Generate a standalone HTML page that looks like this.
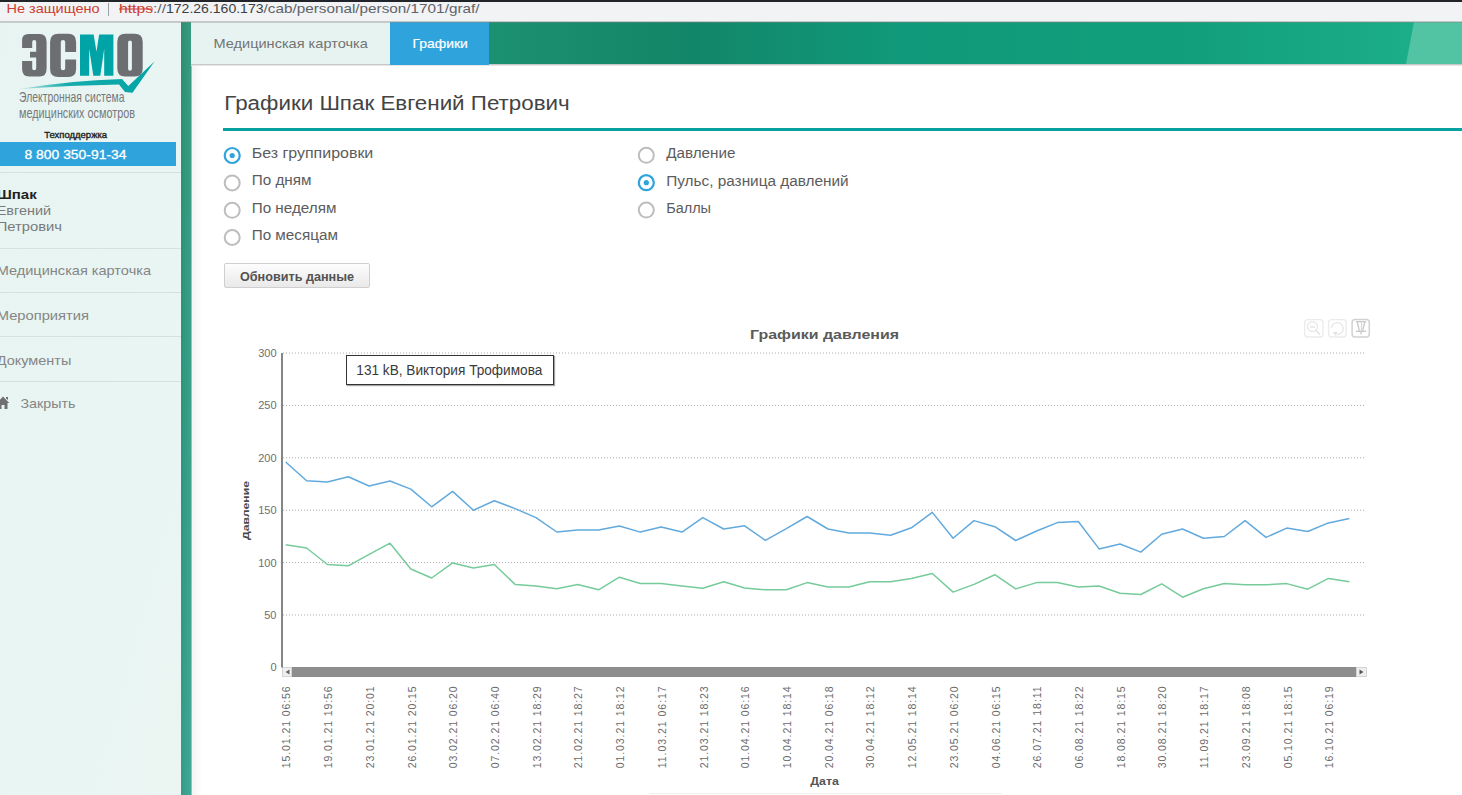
<!DOCTYPE html>
<html><head><meta charset="utf-8">
<style>
html,body{margin:0;padding:0;}
body{width:1462px;height:795px;overflow:hidden;position:relative;background:#fff;font-family:"Liberation Sans",sans-serif;}
.abs{position:absolute;}
svg{position:absolute;left:0;top:0;}
</style></head><body>
<!-- browser top -->
<div class="abs" style="left:0;top:0;width:1462px;height:2px;background:#212428"></div>
<div class="abs" style="left:0;top:2px;width:1462px;height:19px;background:#f1f3f4"></div>
<div class="abs" style="left:0;top:21px;width:1462px;height:1px;background:#c6c7c7"></div>
<!-- sidebar -->
<div class="abs" style="left:0;top:22px;width:181px;height:773px;background:linear-gradient(105deg,#e7f4f1 0%,#e8f5f2 50%,#ebf6f3 100%)"></div>
<div class="abs" style="left:181px;top:22px;width:10px;height:773px;background:linear-gradient(90deg,rgba(0,40,20,0.07),rgba(255,255,255,0.05)),linear-gradient(180deg,#2e967a 0%,#319d84 50%,#37a491 100%)"></div>
<!-- tab bar -->
<div class="abs" style="left:191px;top:22px;width:1271px;height:42px;background:linear-gradient(90deg,#1c9171 23.4%,#138568 38.5%,#10997a 55.8%,#11a07b 79.4%,#1cae89 96%,#1db08a 100%)"></div>
<div class="abs" style="left:191px;top:22px;width:199px;height:42px;background:#e7f3f0"></div>
<div class="abs" style="left:390px;top:22px;width:99px;height:43px;background:#2fa4dc"></div>
<div class="abs" style="left:191px;top:64px;width:199px;height:1px;background:#c6c9c8"></div><div class="abs" style="left:489px;top:64px;width:973px;height:1px;background:#c6c9c8"></div><div class="abs" style="left:191px;top:65px;width:1271px;height:1px;background:#e6e6e6"></div>
<div class="abs" style="left:191px;top:66px;width:1px;height:729px;background:#b4b4b4"></div><div class="abs" style="left:192px;top:66px;width:10px;height:729px;background:linear-gradient(90deg,#f3f3f3,#ffffff)"></div>

<svg width="1462" height="795" viewBox="0 0 1462 795">
<polygon points="1414,22 1462,22 1462,64 1406,64" fill="#52c3a3"/><rect x="0" y="22" width="1462" height="1" fill="#888" fill-opacity="0.35"/>
<!-- address bar text -->
<g font-size="13">
<text x="6.5" y="13" fill="#cf3b30" textLength="93" lengthAdjust="spacingAndGlyphs">Не защищено</text>
<rect x="108" y="3" width="1" height="13" fill="#9aa0a6"/>
<text x="119" y="13" fill="#cf3b30" textLength="34" lengthAdjust="spacingAndGlyphs">https</text>
<rect x="119" y="8.5" width="34" height="1" fill="#cf3b30"/>
<text x="153" y="13" fill="#5f6368" textLength="13" lengthAdjust="spacingAndGlyphs">://</text>
<text x="166" y="13" fill="#3c4043" textLength="97.5" lengthAdjust="spacingAndGlyphs">172.26.160.173</text>
<text x="263.5" y="13" fill="#5f6368" textLength="216" lengthAdjust="spacingAndGlyphs">/cab/personal/person/1701/graf/</text>
</g>

<!-- logo -->
<g fill="#6d6e71">
<path d="M22.1,40.5 Q22.1,34.1 28.5,34.1 H39.6 Q46.6,34.1 46.6,42 V68.5 Q46.6,76.5 39.6,76.5 H29.1 Q22.1,76.5 22.1,69 V61.1 H32.2 V68.3 Q32.2,70.3 34.2,70.3 Q36.2,70.3 36.2,68.3 V57.4 H30 V51.7 H36.2 V42 Q36.2,40 34.2,40 Q32.2,40 32.2,42 V47.9 H22.1 Z"/>
<path d="M50.1,42 Q50.1,33.8 58.5,33.8 H68.2 Q76.1,33.8 76.1,42 V52 H65.2 V42.1 Q65.2,40.1 63,40.1 Q60.8,40.1 60.8,42.1 V68.3 Q60.8,70.3 63,70.3 Q65.2,70.3 65.2,68.3 V59.6 H76.1 V68.9 Q76.1,76.9 68.2,76.9 H58.5 Q50.1,76.9 50.1,68.9 Z"/>
<path d="M125.3,33.7 H134.7 Q142.7,33.7 142.7,41.7 V68.5 Q142.7,76.5 134.7,76.5 H125.3 Q117.3,76.5 117.3,68.5 V41.7 Q117.3,33.7 125.3,33.7 Z M128.1,42.3 Q128.1,40.4 130,40.4 Q131.9,40.4 131.9,42.3 V68.8 Q131.9,70.7 130,70.7 Q128.1,70.7 128.1,68.8 Z" fill-rule="evenodd"/>
</g>
<path d="M80,34.6 L93.6,34.6 L96.5,51.7 L99.1,34.6 L113.4,34.6 L113.4,75.7 L104.2,75.7 L104.2,48.8 L100.3,75.7 L93.3,75.7 L89.2,48.8 L89.2,75.7 L80,75.7 Z" fill="#00a4a6"/>
<defs><linearGradient id="sw" x1="19" y1="0" x2="154" y2="0" gradientUnits="userSpaceOnUse"><stop offset="0" stop-color="#00a4a6" stop-opacity="0.15"/><stop offset="0.35" stop-color="#00a4a6" stop-opacity="0.9"/><stop offset="1" stop-color="#00a4a6"/></linearGradient></defs><path d="M19,89 Q70,80.5 122,79 L128.3,86 L154.5,61.5 L132.5,92.8 L125,92 L119,84.6 Q70,85.5 19,89 Z" fill="url(#sw)"/>
<g fill="#77787a" font-size="14.5">
<text x="19" y="102.4" textLength="105.5" lengthAdjust="spacingAndGlyphs">Электронная система</text>
<text x="19" y="118.1" textLength="116" lengthAdjust="spacingAndGlyphs">медицинских осмотров</text>
</g>
<text x="44.3" y="137.9" font-size="8.8" fill="#222" stroke="#222" stroke-width="0.35" textLength="62.8" lengthAdjust="spacingAndGlyphs">Техподдержка</text>
</svg>

<div class="abs" style="left:0;top:142px;width:176px;height:24px;background:#2ea3dc"></div>
<div class="abs" style="left:0;top:172px;width:181px;height:1px;background:#d6e0de"></div>
<div class="abs" style="left:0;top:248px;width:181px;height:1px;background:#d6e0de"></div>
<div class="abs" style="left:0;top:292px;width:181px;height:1px;background:#d6e0de"></div>
<div class="abs" style="left:0;top:336px;width:181px;height:1px;background:#d6e0de"></div>
<div class="abs" style="left:0;top:381px;width:181px;height:1px;background:#d6e0de"></div>
<!-- content -->
<div class="abs" style="left:223px;top:128px;width:1239px;height:3px;background:#06a1a1"></div>
<div class="abs" style="left:224px;top:263px;width:146px;height:25px;border:1px solid #cfcfcf;border-radius:2px;box-sizing:border-box;background:linear-gradient(#fdfdfd,#e9e9e9)"></div>
<!-- chart scrollbar -->
<div class="abs" style="left:282px;top:667px;width:1085px;height:10px;background:#8e8e8e"></div>
<div class="abs" style="left:282px;top:667px;width:10px;height:10px;background:#efefef;border:1px solid #d4d4d4;box-sizing:border-box"></div>
<div class="abs" style="left:1356px;top:667px;width:11px;height:10px;background:#efefef;border:1px solid #d4d4d4;box-sizing:border-box"></div>
<div class="abs" style="left:346px;top:355px;width:208px;height:30px;border:1px solid #333;box-sizing:border-box;background:#fff;box-shadow:1px 1px 1px rgba(0,0,0,.35)"></div>
<div class="abs" style="left:649px;top:793px;width:353px;height:1px;background:#efefef"></div>

<svg width="1462" height="795" viewBox="0 0 1462 795">
<!-- phone -->
<text x="24.5" y="158.8" font-size="13" fill="#fff" stroke="#fff" stroke-width="0.3" textLength="102" lengthAdjust="spacingAndGlyphs">8 800 350-91-34</text>
<!-- person -->
<text x="-3.3" y="199" font-size="13" font-weight="bold" fill="#222" textLength="40" lengthAdjust="spacingAndGlyphs">Шпак</text>
<g font-size="13" fill="#7a7a7a">
<text x="-3.3" y="215.1" textLength="54.3" lengthAdjust="spacingAndGlyphs">Евгений</text>
<text x="-3.3" y="231.2" textLength="65.3" lengthAdjust="spacingAndGlyphs">Петрович</text>
</g>
<g font-size="13" fill="#858585">
<text x="-3.3" y="275.4" textLength="154.3" lengthAdjust="spacingAndGlyphs">Медицинская карточка</text>
<text x="-3.3" y="320.2" textLength="92.3" lengthAdjust="spacingAndGlyphs">Мероприятия</text>
<text x="-3.3" y="364.7" textLength="74.6" lengthAdjust="spacingAndGlyphs">Документы</text>
<text x="20.4" y="408.3" textLength="55" lengthAdjust="spacingAndGlyphs">Закрыть</text>
</g>
<path d="M-3,403 L3,396.5 L9.3,403 L7.5,403 L7.5,409 L4.5,409 L4.5,405 L1.5,405 L1.5,409 L-1.5,409 L-1.5,403 Z M6,397 H8 V400 L6,398.5 Z" fill="#6f6f6f"/>
<!-- tabs text -->
<text x="213.5" y="48.3" font-size="13" fill="#737373" textLength="154.3" lengthAdjust="spacingAndGlyphs">Медицинская карточка</text>
<text x="412.6" y="48.3" font-size="13" fill="#fff" stroke="#fff" stroke-width="0.2" textLength="55.2" lengthAdjust="spacingAndGlyphs">Графики</text>
<!-- heading -->
<text x="224.3" y="110.3" font-size="19.6" fill="#444" textLength="345.4" lengthAdjust="spacingAndGlyphs">Графики Шпак Евгений Петрович</text>
<!-- radios -->
<g fill="none" stroke="#bdbdbd" stroke-width="2">
<circle cx="232.2" cy="182.9" r="7.5"/>
<circle cx="232.2" cy="210.3" r="7.5"/>
<circle cx="232.2" cy="237.5" r="7.5"/>
<circle cx="646.3" cy="155.3" r="7.5"/>
<circle cx="646.3" cy="210.1" r="7.5"/>
</g>
<g fill="none" stroke="#2ea3dc" stroke-width="2.2">
<circle cx="232.2" cy="155.5" r="7.5"/>
<circle cx="646.3" cy="182.7" r="7.5"/>
</g>
<g fill="#2ea3dc">
<circle cx="232.2" cy="155.5" r="2.6"/>
<circle cx="646.3" cy="182.7" r="2.6"/>
</g>
<g font-size="14" fill="#5c5c5c">
<text x="251.7" y="157.9" textLength="121.6" lengthAdjust="spacingAndGlyphs">Без группировки</text>
<text x="251.7" y="185.3" textLength="59.8" lengthAdjust="spacingAndGlyphs">По дням</text>
<text x="251.7" y="212.7" textLength="84.7" lengthAdjust="spacingAndGlyphs">По неделям</text>
<text x="251.7" y="240.1" textLength="86.2" lengthAdjust="spacingAndGlyphs">По месяцам</text>
<text x="666.2" y="158.1" textLength="69.2" lengthAdjust="spacingAndGlyphs">Давление</text>
<text x="666.2" y="185.5" textLength="182.5" lengthAdjust="spacingAndGlyphs">Пульс, разница давлений</text>
<text x="666.2" y="212.9" textLength="44.8" lengthAdjust="spacingAndGlyphs">Баллы</text>
</g>
<text x="240" y="280.8" font-size="12.2" font-weight="bold" fill="#525252" textLength="114" lengthAdjust="spacingAndGlyphs">Обновить данные</text>

<!-- chart -->
<text x="750" y="338.8" font-size="13" font-weight="bold" fill="#5a5a5a" textLength="149" lengthAdjust="spacingAndGlyphs">Графики давления</text>
<g fill="none">
<rect x="1304.6" y="319.6" width="18.4" height="17.4" rx="3" stroke="#ebebeb" stroke-width="1.3"/>
<rect x="1328.6" y="319.6" width="17.6" height="17.4" rx="3" stroke="#ebebeb" stroke-width="1.3"/>
<rect x="1352.1" y="319.6" width="17.2" height="17.4" rx="3" stroke="#d2d2d2" stroke-width="1.5"/>
<circle cx="1312.5" cy="326.6" r="5" stroke="#e6e6e6" stroke-width="1.2"/>
<line x1="1316" y1="330.3" x2="1319.8" y2="334.8" stroke="#e2e2e2" stroke-width="1.4"/>
<line x1="1310" y1="327" x2="1315" y2="327" stroke="#e2e2e2" stroke-width="1.4"/>
<path d="M1331.3,328 A6,6 0 1 1 1336.5,334.5" stroke="#e6e6e6" stroke-width="1.2"/>
<path d="M1333,332 L1335.5,336 L1337.5,332 Z" fill="#e2e2e2" stroke="none"/>
</g>
<g fill="none" stroke="#c8c8c8" stroke-width="1.3">
<path d="M1355.8,321.7 H1366.2"/>
<path d="M1357.2,322 L1359.4,330.8 M1364.8,322 L1362.6,330.8"/>
<path d="M1361.5,322 V330.8" stroke="#d8d8d8" stroke-width="1.2"/>
<path d="M1355.8,331.3 H1366.2"/>
<path d="M1361,331.3 V334.5"/>
</g>
<line x1="283" y1="353.0" x2="1366" y2="353.0" stroke="#a8a8a8" stroke-width="1" stroke-dasharray="1 2"/>
<line x1="283" y1="405.4" x2="1366" y2="405.4" stroke="#a8a8a8" stroke-width="1" stroke-dasharray="1 2"/>
<line x1="283" y1="457.8" x2="1366" y2="457.8" stroke="#a8a8a8" stroke-width="1" stroke-dasharray="1 2"/>
<line x1="283" y1="510.2" x2="1366" y2="510.2" stroke="#a8a8a8" stroke-width="1" stroke-dasharray="1 2"/>
<line x1="283" y1="562.6" x2="1366" y2="562.6" stroke="#a8a8a8" stroke-width="1" stroke-dasharray="1 2"/>
<line x1="283" y1="615.0" x2="1366" y2="615.0" stroke="#a8a8a8" stroke-width="1" stroke-dasharray="1 2"/>

<rect x="281" y="353" width="2" height="314.5" fill="#858585"/>
<g font-size="11" fill="#6e6e6e">
<text x="276.5" y="357.0" text-anchor="end">300</text>
<text x="276.5" y="409.4" text-anchor="end">250</text>
<text x="276.5" y="461.8" text-anchor="end">200</text>
<text x="276.5" y="514.2" text-anchor="end">150</text>
<text x="276.5" y="566.6" text-anchor="end">100</text>
<text x="276.5" y="619.0" text-anchor="end">50</text>
<text x="276.5" y="671.4" text-anchor="end">0</text>

</g>
<text transform="translate(249,540) rotate(-90)" font-size="9.3" font-weight="bold" fill="#4a4a4a" textLength="59" lengthAdjust="spacingAndGlyphs">Давление</text>
<polyline points="285.7,462.0 306.6,480.7 327.4,481.9 348.3,476.7 369.1,486.0 390.0,481.0 410.8,489.1 431.7,506.8 452.6,491.4 473.4,510.2 494.3,500.7 515.1,508.6 536.0,517.6 556.8,532.0 577.7,530.1 598.6,530.1 619.4,526.0 640.3,532.1 661.1,527.1 682.0,532.1 702.8,517.6 723.7,529.0 744.6,525.8 765.4,540.3 786.3,528.7 807.1,516.5 828.0,529.0 848.8,533.0 869.7,533.0 890.6,535.3 911.4,527.8 932.3,512.4 953.1,538.2 974.0,520.6 994.8,526.7 1015.7,540.5 1036.6,531.0 1057.4,522.6 1078.3,521.5 1099.1,548.9 1120.0,544.0 1140.8,552.1 1161.7,534.2 1182.6,529.0 1203.4,538.3 1224.3,536.5 1245.1,520.6 1266.0,537.4 1286.8,528.1 1307.7,531.5 1328.5,522.9 1349.4,518.6" fill="none" stroke="#62aadd" stroke-width="1.5" stroke-linejoin="round"/>
<polyline points="285.7,544.8 306.6,548.0 327.4,564.5 348.3,565.8 369.1,554.3 390.0,543.2 410.8,569.0 431.7,578.0 452.6,562.9 473.4,567.9 494.3,564.5 515.1,584.4 536.0,586.0 556.8,588.7 577.7,584.4 598.6,589.8 619.4,577.2 640.3,583.5 661.1,583.5 682.0,586.0 702.8,588.3 723.7,581.7 744.6,588.0 765.4,589.8 786.3,589.8 807.1,582.6 828.0,587.1 848.8,587.1 869.7,581.7 890.6,581.7 911.4,578.5 932.3,573.5 953.1,592.1 974.0,584.4 994.8,574.7 1015.7,588.9 1036.6,582.6 1057.4,582.6 1078.3,587.1 1099.1,586.0 1120.0,593.3 1140.8,594.5 1161.7,583.8 1182.6,597.2 1203.4,588.8 1224.3,583.6 1245.1,584.7 1266.0,584.7 1286.8,583.6 1307.7,589.2 1328.5,578.4 1349.4,581.8" fill="none" stroke="#76cb9a" stroke-width="1.5" stroke-linejoin="round"/>
<path d="M289.5,669.5 L285.5,672 L289.5,674.5 Z" fill="#666"/>
<path d="M1359.5,669.5 L1363.5,672 L1359.5,674.5 Z" fill="#555"/>
<text x="356.3" y="374.8" font-size="14" fill="#3a3a3a" textLength="186" lengthAdjust="spacingAndGlyphs">131 kB, Виктория Трофимова</text>
<g font-size="10.5" fill="#6a6a6a">
<text transform="translate(290.4,768.3) rotate(-90)" textLength="82" lengthAdjust="spacing">15.01.21 06:56</text>
<text transform="translate(332.1,768.3) rotate(-90)" textLength="82" lengthAdjust="spacing">19.01.21 19:56</text>
<text transform="translate(373.8,768.3) rotate(-90)" textLength="82" lengthAdjust="spacing">23.01.21 20:01</text>
<text transform="translate(415.5,768.3) rotate(-90)" textLength="82" lengthAdjust="spacing">26.01.21 20:15</text>
<text transform="translate(457.3,768.3) rotate(-90)" textLength="82" lengthAdjust="spacing">03.02.21 06:20</text>
<text transform="translate(499.0,768.3) rotate(-90)" textLength="82" lengthAdjust="spacing">07.02.21 06:40</text>
<text transform="translate(540.7,768.3) rotate(-90)" textLength="82" lengthAdjust="spacing">13.02.21 18:29</text>
<text transform="translate(582.4,768.3) rotate(-90)" textLength="82" lengthAdjust="spacing">21.02.21 18:27</text>
<text transform="translate(624.1,768.3) rotate(-90)" textLength="82" lengthAdjust="spacing">01.03.21 18:12</text>
<text transform="translate(665.8,768.3) rotate(-90)" textLength="82" lengthAdjust="spacing">11.03.21 06:17</text>
<text transform="translate(707.5,768.3) rotate(-90)" textLength="82" lengthAdjust="spacing">21.03.21 18:23</text>
<text transform="translate(749.3,768.3) rotate(-90)" textLength="82" lengthAdjust="spacing">01.04.21 06:16</text>
<text transform="translate(791.0,768.3) rotate(-90)" textLength="82" lengthAdjust="spacing">10.04.21 18:14</text>
<text transform="translate(832.7,768.3) rotate(-90)" textLength="82" lengthAdjust="spacing">20.04.21 06:18</text>
<text transform="translate(874.4,768.3) rotate(-90)" textLength="82" lengthAdjust="spacing">30.04.21 18:12</text>
<text transform="translate(916.1,768.3) rotate(-90)" textLength="82" lengthAdjust="spacing">12.05.21 18:14</text>
<text transform="translate(957.8,768.3) rotate(-90)" textLength="82" lengthAdjust="spacing">23.05.21 06:20</text>
<text transform="translate(999.5,768.3) rotate(-90)" textLength="82" lengthAdjust="spacing">04.06.21 06:15</text>
<text transform="translate(1041.3,768.3) rotate(-90)" textLength="82" lengthAdjust="spacing">26.07.21 18:11</text>
<text transform="translate(1083.0,768.3) rotate(-90)" textLength="82" lengthAdjust="spacing">06.08.21 18:22</text>
<text transform="translate(1124.7,768.3) rotate(-90)" textLength="82" lengthAdjust="spacing">18.08.21 18:15</text>
<text transform="translate(1166.4,768.3) rotate(-90)" textLength="82" lengthAdjust="spacing">30.08.21 18:20</text>
<text transform="translate(1208.1,768.3) rotate(-90)" textLength="82" lengthAdjust="spacing">11.09.21 18:17</text>
<text transform="translate(1249.8,768.3) rotate(-90)" textLength="82" lengthAdjust="spacing">23.09.21 18:08</text>
<text transform="translate(1291.5,768.3) rotate(-90)" textLength="82" lengthAdjust="spacing">05.10.21 18:15</text>
<text transform="translate(1333.2,768.3) rotate(-90)" textLength="82" lengthAdjust="spacing">16.10.21 06:19</text>

</g>
<text x="810.2" y="784.8" font-size="10.5" font-weight="bold" fill="#555" textLength="28.7" lengthAdjust="spacingAndGlyphs">Дата</text>
</svg>
</body></html>
